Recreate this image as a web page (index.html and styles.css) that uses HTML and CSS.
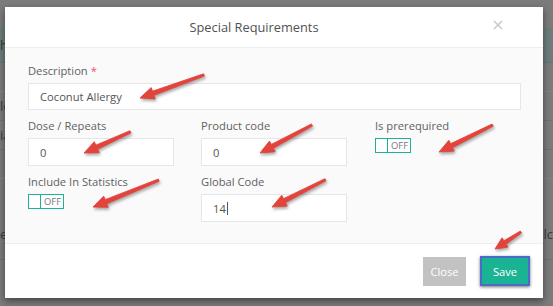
FILE: index.html
```html
<!DOCTYPE html>
<html lang="en">
<head>
  <meta charset="UTF-8">
  <meta name="viewport" content="width=device-width, initial-scale=1">
  <title>Special Requirements</title>
  <link rel="stylesheet" href="styles.css">
</head>
<body>
  <div class="page">
    <div class="page-bar"><span>h</span></div>
    <div class="page-row dotted"></div>
    <div class="page-row"><span>lo</span></div>
    <div class="page-row"><span>ia</span></div>
    <div class="page-row dotted"></div>
    <div class="page-row tall"><span>ec</span><span>lc</span></div>
  </div>

  <div class="modal">
    <div class="modal-header">
      <h4 class="modal-title">Special Requirements</h4>
      <button class="close" type="button">
        <svg width="10" height="10" viewBox="0 0 10 10"><path d="M1 1L9 9M9 1L1 9" stroke="#c6c6c6" stroke-width="1.4" fill="none"/></svg>
      </button>
    </div>

    <div class="modal-body">
      <div class="form-group desc">
        <label>Description <span class="req">*</span></label>
        <div class="form-control wide">Coconut Allergy</div>
      </div>

      <div class="form-grid">
        <div class="form-group">
          <label>Dose / Repeats</label>
          <div class="form-control small">0</div>
        </div>
        <div class="form-group">
          <label>Product code</label>
          <div class="form-control small">0</div>
        </div>
        <div class="form-group">
          <label>Is prerequired</label>
          <span class="switch"><span class="knob"></span><span class="switch-text">OFF</span></span>
        </div>
        <div class="form-group">
          <label>Include In Statistics</label>
          <span class="switch"><span class="knob"></span><span class="switch-text">OFF</span></span>
        </div>
        <div class="form-group">
          <label>Global Code</label>
          <div class="form-control small">14<span class="caret"></span></div>
        </div>
      </div>
    </div>

    <div class="modal-footer">
      <button class="btn btn-default" type="button">Close</button>
      <button class="btn btn-primary" type="button">Save</button>
    </div>
  </div>

  <svg class="arrows" width="553" height="306" viewBox="0 0 553 306">
    <g fill="#e2433a" stroke="#e2433a" stroke-width="0.8" stroke-linejoin="round">
      <polygon transform="translate(140 98) rotate(-19.8)" points="0,0 14,-6 14,-2.2 68,-1.2 68,1.2 14,2.2 14,6"/>
      <polygon transform="translate(84 153) rotate(-24.5)" points="0,0 14,-6 14,-2.2 51,-1.2 51,1.2 14,2.2 14,6"/>
      <polygon transform="translate(260 153) rotate(-28.3)" points="0,0 14,-6 14,-2.2 59,-1.2 59,1.2 14,2.2 14,6"/>
      <polygon transform="translate(439 152) rotate(-26.6)" points="0,0 14,-6 14,-2.2 60,-1.2 60,1.2 14,2.2 14,6"/>
      <polygon transform="translate(93 207) rotate(-22.2)" points="0,0 14,-6 14,-2.2 71,-1.2 71,1.2 14,2.2 14,6"/>
      <polygon transform="translate(272 207) rotate(-27)" points="0,0 14,-6 14,-2.2 60,-1.2 60,1.2 14,2.2 14,6"/>
      <polygon transform="translate(495 249) rotate(-33.2)" points="0,0 12,-5.5 12,-2 31,-1.1 31,1.1 12,2 12,5.5"/>
    </g>
  </svg>
</body>
</html>
```

FILE: styles.css
```css
body { margin: 0; background: #7b7b7b; font-family: "Open Sans", "Noto Sans", sans-serif; color: #676a6c; width: 553px; height: 306px; overflow: hidden; position: relative; }

.page { padding-top: 28px; }
.page-bar { height: 34px; background: #6d7c7c; border-bottom: 1px solid #6a7272; font-size: 13px; color: #3a3a3a; line-height: 34px; }
.page-row { height: 28px; border-bottom: 1px solid #717171; font-size: 13px; color: #3c3c3c; line-height: 28px; display: flex; justify-content: space-between; }
.page-row.dotted { border-bottom: 1px dotted #8a8a8a; }
.page-row.tall { height: 80px; line-height: 110px; }

.modal { position: absolute; left: 5px; top: 7px; width: 538px; background: #fff; box-shadow: 0 3px 7px rgba(0,0,0,.45); }

.modal-header { height: 40px; border-bottom: 1px solid #eceeef; display: flex; align-items: center; position: relative; }
.modal-title { margin: 0; flex: 1; padding-right: 40px; text-align: center; font-size: 12.8px; font-weight: 400; color: #505253; }
.close { position: absolute; right: 40px; top: 13px; background: none; border: none; padding: 0; width: 10px; height: 10px; display: flex; }

.modal-body { background: #fafafa; padding: 15px 22px 21px 23px; }
.form-group.desc { margin-bottom: 8px; }
label { display: block; font-size: 11.2px; line-height: 16px; margin-bottom: 4px; color: #5f6163; }
.req { color: #ed5565; }

.form-control { box-sizing: border-box; height: 27px; border: 1px solid #e5e6e7; background: #fff; padding: 0 11px; font-size: 11.2px; line-height: 25px; color: #555; display: flex; align-items: center; }
.form-control.wide { width: 493px; }
.form-control.small { width: 146px; height: 28px; }

.form-grid { display: grid; grid-template-columns: 173px 174px 1fr; row-gap: 8px; }

.caret { width: 1px; height: 13px; margin-left: 1px; background: #555; }

.switch { box-sizing: border-box; display: flex; width: 36px; height: 15px; border: 1px solid #1ab394; background: #fff; }
.knob { width: 11px; border-right: 1px solid #1ab394; }
.switch-text { font-size: 9.4px; line-height: 13px; color: #777; padding-left: 3px; }

.modal-footer { border-top: 1px solid #eceeef; height: 54px; display: flex; justify-content: flex-end; align-items: center; gap: 14px; padding-right: 13px; }
.btn { font-family: "Open Sans", "Noto Sans", sans-serif; font-size: 11.2px; color: #fff; border: none; padding: 0; cursor: pointer; }
.btn-default { width: 43px; height: 29px; background: #c2c2c2; }
.btn-primary { box-sizing: border-box; width: 50px; height: 30px; background: #1ab394; border: 2.5px solid #4a6cc6; box-shadow: 0 1px 3px rgba(0,0,0,.55); }

.arrows { position: absolute; left: 0; top: 0; filter: drop-shadow(1px 2px 1.5px rgba(0,0,0,.35)); }
```
